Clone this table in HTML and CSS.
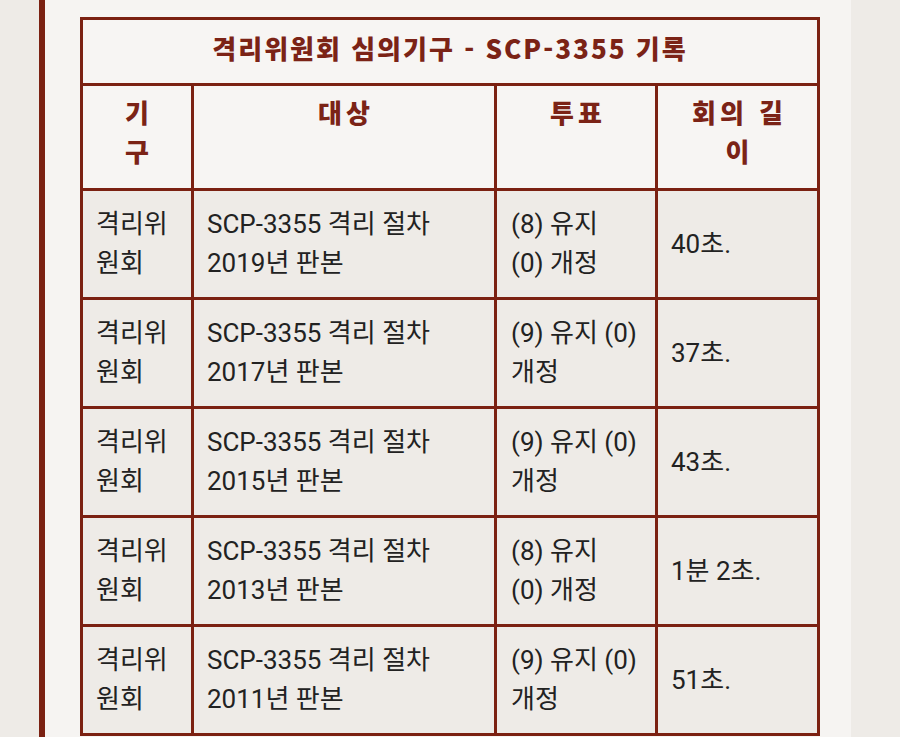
FILE: index.html
```html
<!DOCTYPE html>
<html lang="ko">
<head>
<meta charset="utf-8">
<title>SCP-3355 기록</title>
<link rel="stylesheet" href="styles.css">
</head>
<body>
<div class="page">
  <main class="panel">
    <table class="records">
      <colgroup>
        <col class="c-body">
        <col class="c-target">
        <col class="c-vote">
        <col class="c-len">
      </colgroup>
      <thead>
        <tr><th class="title" colspan="4">격리위원회 심의기구 - SCP-3355 기록</th></tr>
        <tr>
          <th class="narrow">기구</th>
          <th>대상</th>
          <th>투표</th>
          <th>회의 길이</th>
        </tr>
      </thead>
      <tbody>
        <tr><td>격리위원회</td><td>SCP-3355 격리 절차 2019년 판본</td><td>(8) 유지<br>(0) 개정</td><td>40초.</td></tr>
        <tr><td>격리위원회</td><td>SCP-3355 격리 절차 2017년 판본</td><td>(9) 유지 (0) 개정</td><td>37초.</td></tr>
        <tr><td>격리위원회</td><td>SCP-3355 격리 절차 2015년 판본</td><td>(9) 유지 (0) 개정</td><td>43초.</td></tr>
        <tr><td>격리위원회</td><td>SCP-3355 격리 절차 2013년 판본</td><td>(8) 유지<br>(0) 개정</td><td>1분 2초.</td></tr>
        <tr><td>격리위원회</td><td>SCP-3355 격리 절차 2011년 판본</td><td>(9) 유지 (0) 개정</td><td>51초.</td></tr>
      </tbody>
    </table>
  </main>
</div>
</body>
</html>
```

FILE: styles.css
```css
html, body {
  margin: 0;
  padding: 0;
  background: #eeebe7;
}

.page {
  padding: 0 49px 0 39px;
}

.panel {
  background: #f6f4f2;
  border-left: 6px solid #7b2112;
  padding: 17px 31px 40px 35px;
  min-height: 800px;
}

.records {
  width: 740px;
  border-collapse: separate;
  border-spacing: 0;
  table-layout: fixed;
  border-top: 3px solid #7b2112;
  border-left: 3px solid #7b2112;
  font-family: Roboto, "Noto Sans CJK KR", sans-serif;
  font-size: 26px;
  line-height: 39px;
  color: #222222;
}

.c-body { width: 111px; }
.c-target { width: 303px; }
.c-vote { width: 161px; }
.c-len { width: 162px; }

.records th,
.records td {
  border-right: 3px solid #7b2112;
  border-bottom: 3px solid #7b2112;
}

.records th {
  background: #f7f5f3;
  color: #7b2316;
  font-family: "Noto Sans CJK KR", sans-serif;
  font-weight: 900;
  letter-spacing: 4px;
  text-align: center;
  vertical-align: top;
  padding: 6px 24px 18px 28px;
  line-height: 39px;
}

.records th.narrow {
  padding-left: 36px;
  padding-right: 32px;
}

.records th.title {
  letter-spacing: 2px;
  padding: 8px 20px 16px;
}

.records td {
  background: #eeebe7;
  text-align: left;
  vertical-align: middle;
  padding: 14px 13px;
}

.records td:nth-child(3) {
  padding-left: 14px;
  padding-right: 12px;
}
```
